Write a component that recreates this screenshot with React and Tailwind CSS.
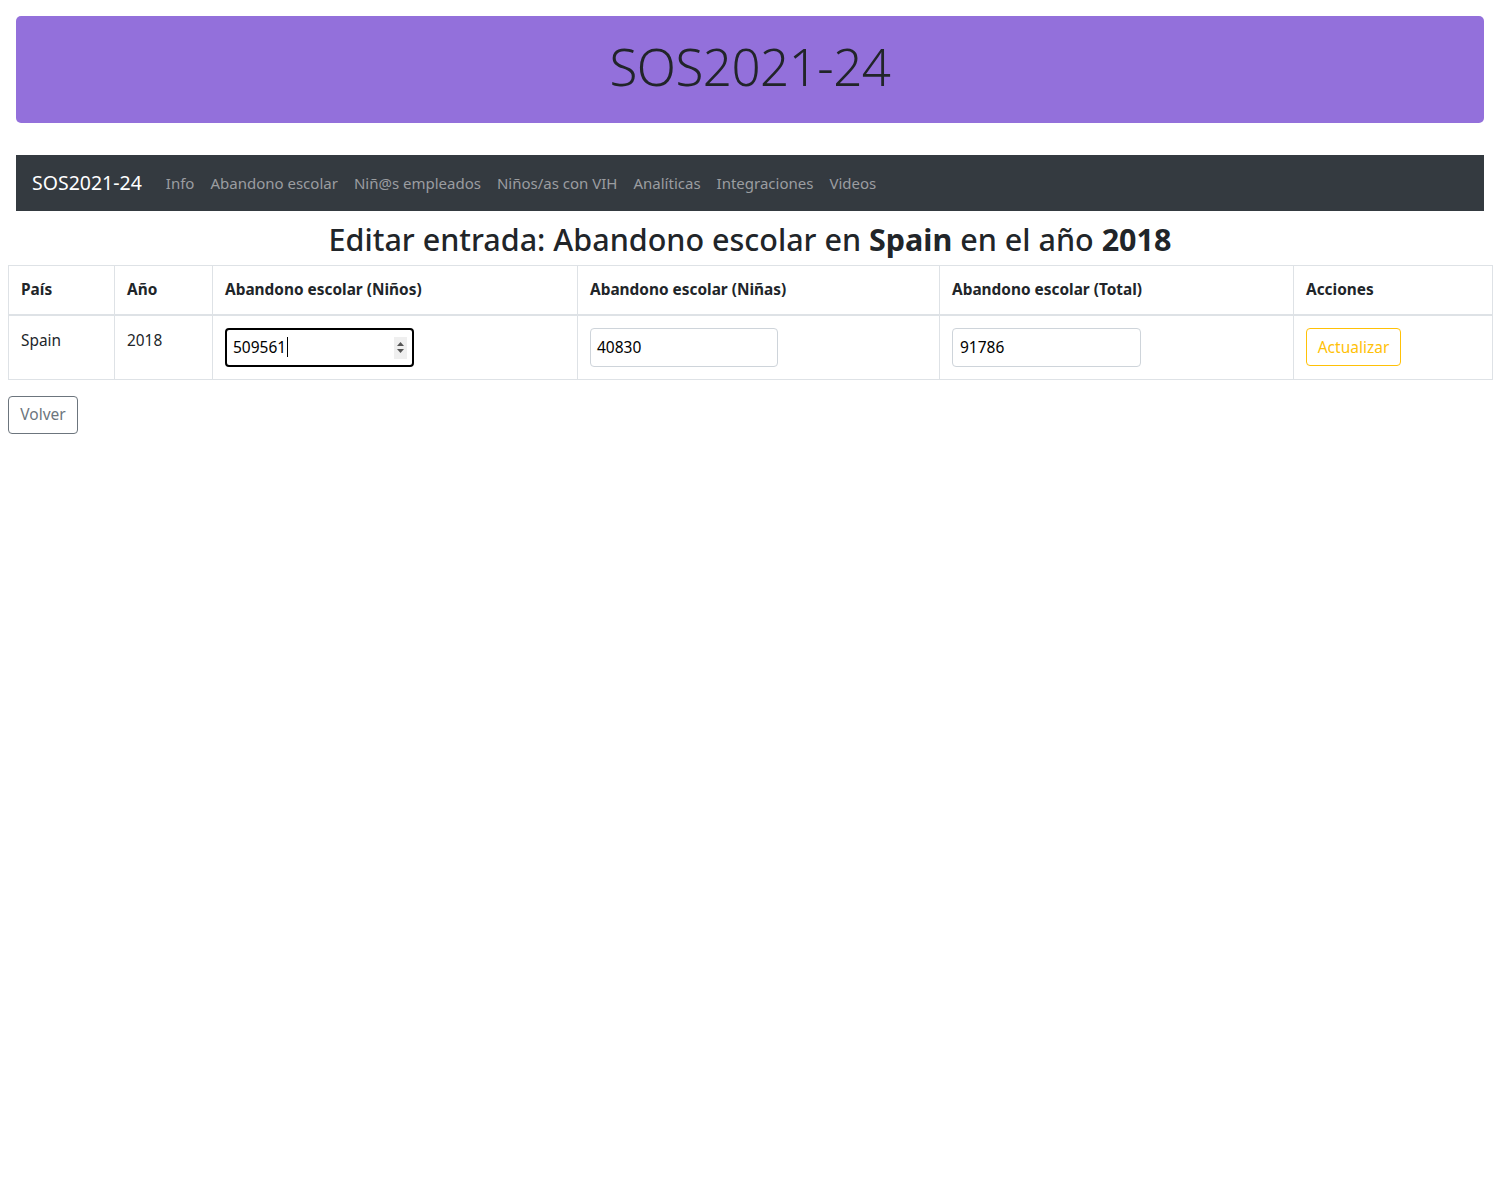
import React from 'react';

const navLinks = ['Info', 'Abandono escolar', 'Niñ@s empleados', 'Niños/as con VIH', 'Analíticas', 'Integraciones', 'Videos'];

const App = () => {
  return (
    <div className="min-h-[1200px] bg-white text-[#212529] font-['Noto_Sans',sans-serif]">
      {/* Jumbotron */}
      <div className="px-4 pt-4">
        <div className="h-[107px] rounded-[5px] bg-[#9370db] flex items-center justify-center">
          <h1 className="text-[51px] font-light text-[#212529] leading-none tracking-[-0.5px] -mt-[6px]">SOS2021-24</h1>
        </div>
      </div>

      {/* Navbar */}
      <div className="px-4 mt-8">
        <nav className="h-14 bg-[#343a40] flex items-center px-4">
          <span className="text-[19.5px] text-white mr-4">SOS2021-24</span>
          <ul className="flex items-center pt-[1px]">
            {navLinks.map((l) => (
              <li key={l} className="px-2 text-[15px] text-[#9b9da0]">{l}</li>
            ))}
          </ul>
        </nav>
      </div>

      <h3 className="text-center text-[30.5px] font-medium leading-[1.2] mt-[10px] mb-[7px]">
        Editar entrada: Abandono escolar en <b className="font-bold">Spain</b> en el año <b className="font-bold">2018</b>
      </h3>

      <div className="px-2">
        <table className="table-fixed border-collapse w-[1484px] text-[15.4px]">
          <colgroup>
            <col className="w-[106px]" />
            <col className="w-[98px]" />
            <col className="w-[365px]" />
            <col className="w-[362px]" />
            <col className="w-[354px]" />
            <col className="w-[199px]" />
          </colgroup>
          <thead>
            <tr className="h-[50px]">
              {['País', 'Año', 'Abandono escolar (Niños)', 'Abandono escolar (Niñas)', 'Abandono escolar (Total)', 'Acciones'].map((h) => (
                <th key={h} className="border border-[#dee2e6] border-b-2 px-3 text-left font-bold align-middle">{h}</th>
              ))}
            </tr>
          </thead>
          <tbody>
            <tr className="h-[64px]">
              <td className="border border-[#dee2e6] px-3 pt-[13px] align-top">Spain</td>
              <td className="border border-[#dee2e6] px-3 pt-[13px] align-top">2018</td>
              <td className="border border-[#dee2e6] px-3 align-middle">
                <div className="relative w-[189px] h-[39px] border-2 border-black rounded-[4px] flex items-center pl-[6px]">
                  <span className="text-[15.5px] text-black">509561</span>
                  <span className="w-px h-[20px] bg-black ml-[1px]" />
                  <div className="absolute right-[5px] top-[7px] w-[13px] h-[22px] bg-[#efefef] flex flex-col items-center justify-center gap-[3px]">
                    <svg width="7" height="4" viewBox="0 0 7 4"><path d="M0 4 L3.5 0 L7 4 Z" fill="#555" /></svg>
                    <svg width="7" height="4" viewBox="0 0 7 4"><path d="M0 0 L3.5 4 L7 0 Z" fill="#555" /></svg>
                  </div>
                </div>
              </td>
              <td className="border border-[#dee2e6] px-3 align-middle">
                <div className="w-[188px] h-[39px] border border-[#ced4da] rounded-[4px] flex items-center pl-[6px] text-[15.5px] text-black">40830</div>
              </td>
              <td className="border border-[#dee2e6] px-3 align-middle">
                <div className="w-[189px] h-[39px] border border-[#ced4da] rounded-[4px] flex items-center pl-[7px] text-[15.5px] text-black">91786</div>
              </td>
              <td className="border border-[#dee2e6] px-3 align-middle">
                <button className="h-[38px] w-[95px] border border-[#ffc107] rounded-[4px] text-[#ffc107] text-[15.5px]">Actualizar</button>
              </td>
            </tr>
          </tbody>
        </table>

        <button className="mt-4 h-[38px] w-[70px] border border-[#6c757d] rounded-[4px] text-[#6c757d] text-[15.5px]">Volver</button>
      </div>
    </div>
  );
};

export default App;
